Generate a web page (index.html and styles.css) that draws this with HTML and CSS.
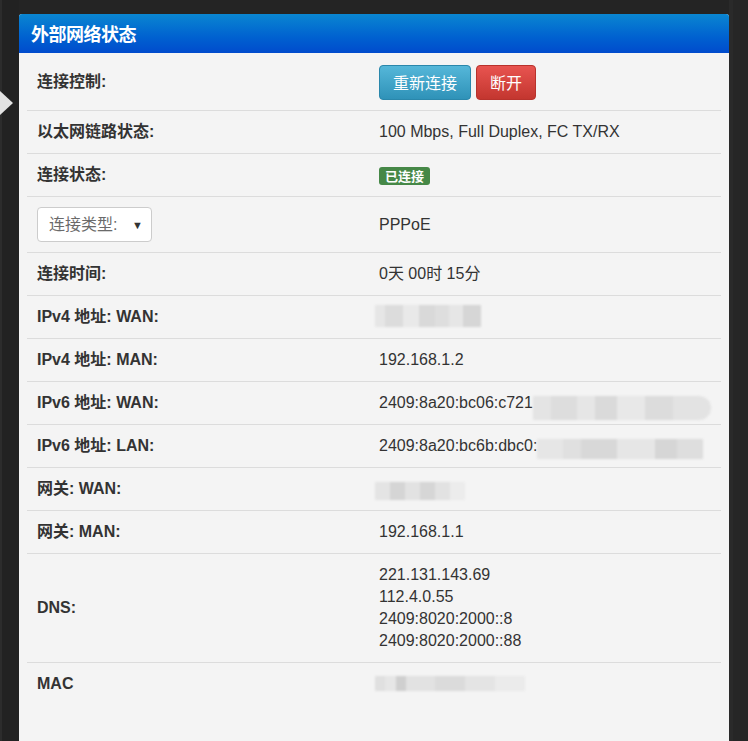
FILE: index.html
```html
<!DOCTYPE html>
<html lang="zh-CN">
<head>
<meta charset="utf-8">
<title>外部网络状态</title>
<link rel="stylesheet" href="styles.css">
</head>
<body>
<div class="page">
  <div class="gutter"><span class="pointer"></span></div>
  <section class="panel">
    <h2 class="panel-title">外部网络状态</h2>
    <div class="panel-body">
      <table class="status">
        <colgroup><col class="c-label"><col class="c-value"></colgroup>
        <tr class="row-tall first">
          <th>连接控制:</th>
          <td><div class="btns"><button class="btn btn-info">重新连接</button><button class="btn btn-danger">断开</button></div></td>
        </tr>
        <tr><th>以太网链路状态:</th><td>100 Mbps, Full Duplex, FC TX/RX</td></tr>
        <tr><th>连接状态:</th><td><span class="badge">已连接</span></td></tr>
        <tr class="row-tall">
          <th><div class="select"><span class="select-text">连接类型:</span><span class="select-arrow">▼</span></div></th>
          <td>PPPoE</td>
        </tr>
        <tr><th>连接时间:</th><td>0天 00时 15分</td></tr>
        <tr><th>IPv4 地址: WAN:</th><td><span class="blur b-ipv4"></span></td></tr>
        <tr><th>IPv4 地址: MAN:</th><td>192.168.1.2</td></tr>
        <tr><th>IPv6 地址: WAN:</th><td>2409:8a20:bc06:c721<span class="blur b-v6wan"></span></td></tr>
        <tr><th>IPv6 地址: LAN:</th><td>2409:8a20:bc6b:dbc0:<span class="blur b-v6lan"></span></td></tr>
        <tr><th>网关: WAN:</th><td><span class="blur b-gw"></span></td></tr>
        <tr><th>网关: MAN:</th><td>192.168.1.1</td></tr>
        <tr><th>DNS:</th><td>221.131.143.69<br>112.4.0.55<br>2409:8020:2000::8<br>2409:8020:2000::88</td></tr>
        <tr class="last"><th>MAC</th><td><span class="blur b-mac"></span></td></tr>
      </table>
    </div>
  </section>
  <div class="right-edge"></div>
</div>
</body>
</html>
```

FILE: styles.css
```css
html, body {
  margin: 0;
  padding: 0;
}
body {
  background: #242424;
  font-family: "Liberation Sans", Arial, "Noto Sans CJK SC", sans-serif;
  color: #333;
  width: 748px;
  height: 741px;
  overflow: hidden;
}
.page {
  display: flex;
  align-items: flex-start;
  height: 741px;
}
.gutter {
  width: 19px;
  flex: none;
  align-self: stretch;
  position: relative;
  background: linear-gradient(to right, #2c2c2c 0, #2c2c2c 2px, #222 2px);
}
.pointer {
  position: absolute;
  left: 0;
  top: 91px;
  width: 0;
  height: 0;
  border-top: 12px solid transparent;
  border-bottom: 12px solid transparent;
  border-left: 13px solid #e2e2e2;
}
.panel {
  width: 710px;
  flex: none;
  margin-top: 14px;
  height: 727px;
  background: #f4f4f4;
  border-radius: 3px 3px 0 0;
}
.right-edge {
  flex: 1;
  align-self: stretch;
  background: linear-gradient(to right, #2a2a2a 0, #2a2a2a 4px, #262626 4px);
}
.panel-title {
  margin: 0;
  height: 39px;
  line-height: 39px;
  padding-left: 12px;
  font-size: 18px;
  font-weight: bold;
  color: #fff;
  font-family: "Noto Sans CJK SC", sans-serif;
  background: linear-gradient(to bottom, #0a86d1 0%, #0061d0 60%, #004bcd 100%);
  border-radius: 3px 3px 0 0;
  letter-spacing: -0.5px;
}
.panel-body {
  padding: 0 8px;
}
.status {
  width: 694px;
  table-layout: fixed;
  border-collapse: collapse;
  font-size: 16px;
}
.c-label { width: 342px; }
.c-value { width: 352px; }
.status th,
.status td {
  padding: 10px 10px;
  height: 22px;
  line-height: 22px;
  text-align: left;
  vertical-align: middle;
  border-top: 1px solid #dcdcdc;
  white-space: nowrap;
}
.status th {
  font-weight: bold;
  color: #333;
}
.status td {
  color: #333;
}
.status tr.first th,
.status tr.first td {
  border-top: none;
}
.status tr.row-tall th,
.status tr.row-tall td {
  height: 35px;
}
.status tr.first th,
.status tr.first td {
  height: 37px;
}
.btns {
  display: flex;
  gap: 5px;
  margin-top: 1px;
}
.btn {
  font-family: "Noto Sans CJK SC", sans-serif;
  font-size: 16px;
  color: #fff;
  height: 35px;
  padding: 0 13px;
  border-radius: 4px;
  cursor: pointer;
  line-height: 33px;
}
.btn-info {
  background: linear-gradient(to bottom, #55b7d9, #2f92b8);
  border: 1px solid #2a87ab;
}
.btn-danger {
  background: linear-gradient(to bottom, #e85450, #c3362f);
  border: 1px solid #b8322c;
}
.badge {
  display: inline-block;
  background: #468847;
  color: #fff;
  font-size: 13px;
  font-weight: bold;
  line-height: 18px;
  padding: 0 6px;
  border-radius: 3px;
  font-family: "Noto Sans CJK SC", sans-serif;
  vertical-align: middle;
}
.select {
  display: inline-flex;
  align-items: center;
  justify-content: space-between;
  box-sizing: border-box;
  width: 115px;
  height: 35px;
  padding: 0 8px 0 11px;
  background: #fff;
  border: 1px solid #ccc;
  border-radius: 4px;
  font-weight: normal;
  color: #6a6a6a;
  font-size: 16px;
}
.select-arrow {
  font-size: 11px;
  color: #333;
}
.blur {
  display: inline-block;
  vertical-align: 0;
  filter: blur(1px);
  margin: -8px 0;
}
.b-ipv4 {
  width: 106px;
  height: 22px;
  margin-left: -4px;
  vertical-align: 3px;
  background: linear-gradient(to right, #e6e6e6 0 10px, #dcdcdc 10px 28px, #e9e9e9 28px 44px, #d9d9d9 44px 60px, #dedede 60px 74px, #e6e6e6 74px 88px, #d6d6d6 88px 106px);
}
.b-v6wan {
  width: 178px;
  height: 24px;
  vertical-align: -4px;
  border-radius: 0 12px 12px 0;
  background: linear-gradient(to right, #e4e4e4 0 18px, #dddddd 18px 44px, #e6e6e6 44px 62px, #dadada 62px 84px, #e8e8e8 84px 112px, #dcdcdc 112px 140px, #e3e3e3 140px 178px);
}
.b-v6lan {
  width: 166px;
  height: 20px;
  background: linear-gradient(to right, #e6e6e6 0 26px, #e0e0e0 26px 44px, #d8d8d8 44px 80px, #e6e6e6 80px 118px, #d6d6d6 118px 140px, #dedede 140px 166px);
}
.b-gw {
  width: 90px;
  height: 18px;
  margin-left: -4px;
  vertical-align: 2px;
  background: linear-gradient(to right, #e4e4e4 0 15px, #d5d5d5 15px 30px, #e2e2e2 30px 45px, #d6d6d6 45px 60px, #e2e2e2 60px 75px, #ececec 75px 90px);
}
.b-mac {
  width: 150px;
  height: 15px;
  margin-left: -4px;
  vertical-align: 6px;
  background: linear-gradient(to right, #e0e0e0 0 10px, #e6e6e6 10px 21px, #cfcfcf 21px 31px, #e2e2e2 31px 60px, #dbdbdb 60px 90px, #e4e4e4 90px 120px, #ebebeb 120px 150px);
}
```
